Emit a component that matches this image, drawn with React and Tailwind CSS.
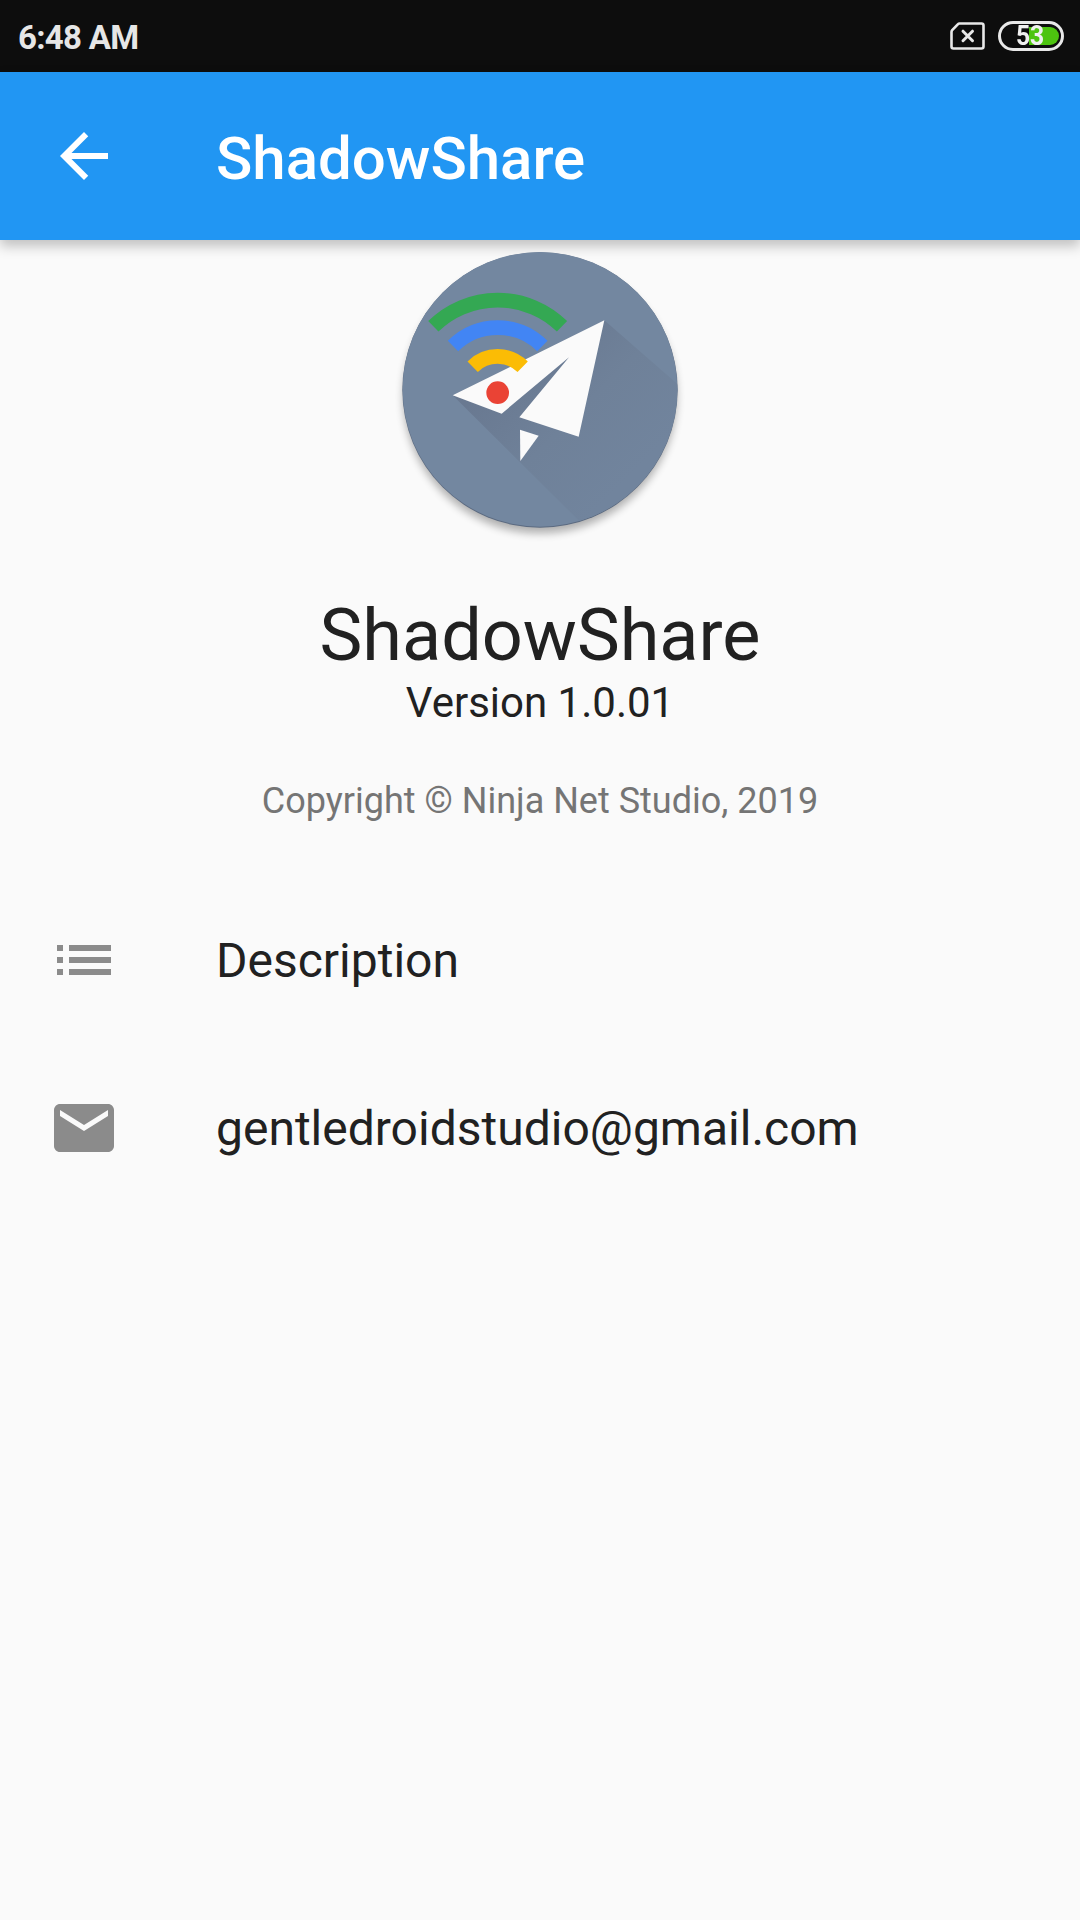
import React from 'react';
import { MdArrowBack, MdEmail, MdList } from 'react-icons/md';

const items = [
  { id: 'description', icon: MdList, label: 'Description' },
  { id: 'email', icon: MdEmail, label: 'gentledroidstudio@gmail.com' },
];

function StatusBar() {
  return (
    <div className="h-[72px] bg-[#0d0d0d] flex items-center justify-between pl-[18px] pr-[16px]">
      <span className="pt-[3px] text-[33px] leading-none tracking-[-0.7px] font-bold text-[#e6e6e6]">6:48 AM</span>
      <div className="flex items-center gap-[13px]">
        <svg className="w-[35px] h-[28px]" viewBox="0 0 35 28" fill="none" stroke="#e8e8e8">
          <path
            d="M9.5 1.5H31.5Q33.5 1.5 33.5 3.5V24.5Q33.5 26.5 31.5 26.5H3.5Q1.5 26.5 1.5 24.5V10Q1.5 9 2.2 8.2L8 2.2Q8.6 1.5 9.5 1.5Z"
            strokeWidth="2.6"
          />
          <path d="M13 9.2L22.5 18.7M22.5 9.2L13 18.7" strokeWidth="3" strokeLinecap="round" />
        </svg>
        <div className="relative w-[66px] h-[30px] rounded-full border-[3px] border-[#e8e8e8] flex items-center justify-center">
          <div className="absolute right-[2px] top-[3px] w-[30px] h-[18px] rounded-r-full bg-[#4dc40f]" />
          <span className="relative -ml-[2px] scale-x-[0.88] text-[28px] leading-none font-bold text-[#f0f0f0]">53</span>
        </div>
      </div>
    </div>
  );
}

function Logo() {
  return (
    <svg className="w-[300px] h-[300px] overflow-visible" viewBox="0 0 900 900">
      <defs>
        <filter id="drop" x="-10%" y="-10%" width="120%" height="120%">
          <feGaussianBlur stdDeviation="12" />
        </filter>
        <linearGradient id="fade" gradientUnits="userSpaceOnUse" x1="330" y1="400" x2="680" y2="750">
          <stop offset="0" stopColor="#697991" />
          <stop offset="0.5" stopColor="#6f8199" />
          <stop offset="1" stopColor="#71849d" />
        </linearGradient>
        <clipPath id="disc">
          <circle cx="450" cy="448" r="412" />
        </clipPath>
      </defs>
      <circle cx="450" cy="470" r="410" fill="#000" opacity="0.3" filter="url(#drop)" />
      <circle cx="450" cy="450" r="413" fill="#5b6a80" />
      <circle cx="450" cy="448" r="412" fill="#7387a0" />
      <g clipPath="url(#disc)">
        <path d="M188 466L643 241L900 465V900H625Z" fill="url(#fade)" />
      </g>
      <path d="M643 241L188 466L335 521L537 352L388 532L566 590Z" fill="#fafafa" />
      <path d="M390 569L446 587L391 663Z" fill="#fafafa" />
      <g fill="none" strokeWidth="44">
        <path d="M130 259A276 276 0 0 1 516 259" stroke="#34a853" />
        <path d="M189 318A190 190 0 0 1 457 318" stroke="#4285f4" />
        <path d="M248 380A107 107 0 0 1 398 380" stroke="#fbbc05" />
      </g>
      <circle cx="323" cy="458" r="34" fill="#ea4335" />
    </svg>
  );
}

function App() {
  return (
    <div className="h-[1920px] w-[1080px] overflow-hidden bg-[#fafafa] font-['Roboto',sans-serif] text-[#212121]">
      <StatusBar />
      <header className="h-[168px] bg-[#2196f3] flex items-center pl-[48px] shadow-[0_6px_12px_rgba(0,0,0,0.24)]">
        <MdArrowBack className="size-[72px] text-white" />
        <h1 className="ml-[96px] pt-[6px] text-[60px] leading-none font-medium text-white">ShadowShare</h1>
      </header>

      <main>
        <div className="flex flex-col items-center">
          <Logo />
          <h2 className="mt-[54px] text-[72px] leading-[84px]">ShadowShare</h2>
          <p className="text-[42px] leading-[49px]">Version 1.0.01</p>
          <p className="mt-[53px] text-[36px] leading-[42px] text-[#757575]">
            Copyright © Ninja Net Studio, 2019
          </p>
        </div>

        <ul className="mt-[54px]">
          {items.map(({ id, icon: Icon, label }) => (
            <li key={id} className="h-[168px] flex items-center pl-[48px]">
              <Icon className="size-[72px] text-[#8b8b8b]" />
              <span className="ml-[96px] pt-[2px] text-[48px] leading-none">{label}</span>
            </li>
          ))}
        </ul>
      </main>
    </div>
  );
}

export default App;
